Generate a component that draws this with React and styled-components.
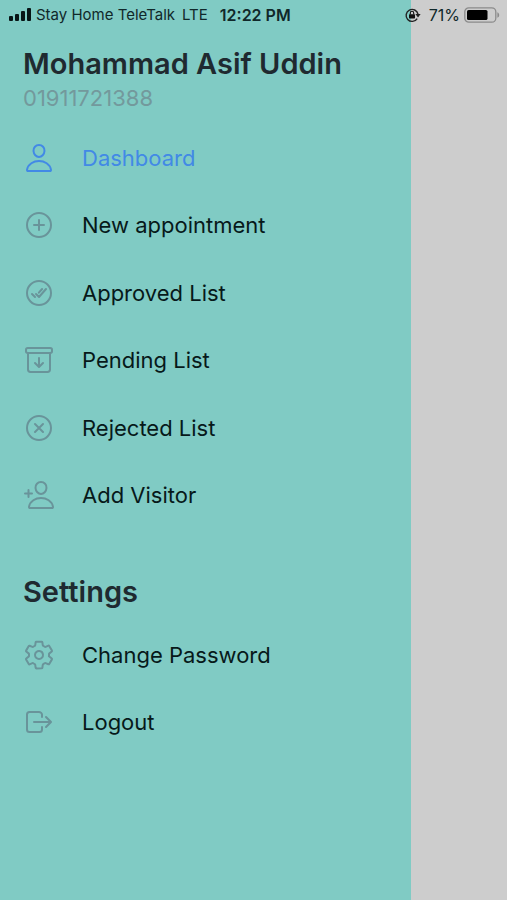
import React from "react";
import styled, { createGlobalStyle } from "styled-components";
import {
  IoPersonOutline,
  IoAddCircleOutline,
  IoCheckmarkDoneCircleOutline,
  IoArchiveOutline,
  IoCloseCircleOutline,
  IoPersonAddOutline,
  IoSettingsOutline,
  IoLogOutOutline,
} from "react-icons/io5";

const GlobalStyle = createGlobalStyle`
  * { box-sizing: border-box; }
  body {
    margin: 0;
    background: #cdcdcd;
    font-family: Inter, "Liberation Sans", sans-serif;
  }
`;

const Screen = styled.div`
  display: grid;
  grid-template-columns: 81% 1fr;
  grid-template-rows: 30px 1fr;
  min-height: 100vh;
`;

const StatusBar = styled.header`
  grid-area: 1 / 1 / 2 / 3;
  z-index: 1;
  display: flex;
  align-items: center;
  padding: 0 7px 0 8px;
  line-height: 20px;
  color: #10282a;
  white-space: nowrap;
`;

const StatusText = styled.span`
  margin-left: ${(p) => p.$gap}px;
  font-size: ${(p) => p.$size}px;
  font-weight: ${(p) => p.$weight || 400};
`;

const StatusRight = styled.div`
  display: flex;
  align-items: center;
  margin-left: auto;
`;

const BatterySvg = styled.svg`
  margin-left: 4px;
`;

const Drawer = styled.aside`
  grid-area: 1 / 1 / 3 / 2;
  padding: 46px 23px 0;
  background: #80cbc4;
`;

const Heading = styled.h1`
  margin: 0;
  font-size: 29px;
  line-height: 36px;
  font-weight: 600;
  color: #1f2a30;
  white-space: nowrap;
`;

const SectionHeading = styled(Heading).attrs({ as: "h2" })`
  margin-top: 45px;
`;

const Phone = styled.p`
  margin: 3px 0 0;
  font-size: 22px;
  line-height: 26px;
  color: #73999c;
`;

const Menu = styled.ul`
  display: grid;
  grid-auto-rows: 1fr;
  min-height: ${(p) => p.$height}px;
  margin: ${(p) => p.$top}px 0 0;
  padding: 0;
  list-style: none;
`;

const MenuLink = styled.a`
  display: flex;
  align-items: center;
  gap: 27px;
  height: 100%;
  font-size: 22px;
  line-height: 28px;
  color: ${(p) => (p.$active ? "#4289e6" : "#07191a")};
  text-decoration: none;

  svg {
    width: 32px;
    height: 32px;
    flex: none;
    color: ${(p) => (p.$active ? "#4289e6" : "#69949a")};
  }
`;

const mainItems = [
  { label: "Dashboard", Icon: IoPersonOutline, active: true },
  { label: "New appointment", Icon: IoAddCircleOutline },
  { label: "Approved List", Icon: IoCheckmarkDoneCircleOutline },
  { label: "Pending List", Icon: IoArchiveOutline },
  { label: "Rejected List", Icon: IoCloseCircleOutline },
  { label: "Add Visitor", Icon: IoPersonAddOutline },
];

const settingsItems = [
  { label: "Change Password", Icon: IoSettingsOutline },
  { label: "Logout", Icon: IoLogOutOutline },
];

function MenuList({ items, height, top }) {
  return (
    <Menu $height={height} $top={top}>
      {items.map(({ label, Icon, active }) => (
        <li key={label}>
          <MenuLink href="#" $active={active} aria-current={active ? "page" : undefined}>
            <Icon aria-hidden="true" />
            {label}
          </MenuLink>
        </li>
      ))}
    </Menu>
  );
}

function SignalIcon() {
  return (
    <svg width="24" height="14" viewBox="0 0 24 14" fill="#071516" aria-hidden="true">
      <rect x="1" y="8" width="4" height="5" rx="1" />
      <rect x="7" y="6" width="4" height="7" rx="1" />
      <rect x="13" y="3" width="4" height="10" rx="1" />
      <rect x="19" y="0" width="4" height="13" rx="1" />
    </svg>
  );
}

function RotationLockIcon() {
  return (
    <svg width="17" height="16" viewBox="0 0 17 16" fill="none" aria-hidden="true">
      <path d="M13.2 11.6A6 6 0 1 1 14 7.2" stroke="#222" strokeWidth="1.4" />
      <path d="M11.4 7h5.2L14 10.4z" fill="#222" />
      <rect x="5" y="7.2" width="6" height="4.2" rx="0.6" fill="#111" />
      <path d="M6.3 7.4V6a1.7 1.7 0 0 1 3.4 0v1.4" stroke="#111" strokeWidth="1.1" />
    </svg>
  );
}

function BatteryIcon() {
  return (
    <BatterySvg width="36" height="16" viewBox="0 0 36 16" aria-hidden="true">
      <rect x="0.8" y="0.8" width="31" height="14.4" rx="4" fill="none" stroke="#8b8b8b" strokeWidth="1.3" />
      <rect x="3" y="3" width="20.5" height="10" rx="1.6" fill="#000" />
      <path d="M33.4 5.2c2.4 1 2.4 4.6 0 5.6z" fill="#8b8b8b" />
    </BatterySvg>
  );
}

export default function App() {
  return (
    <>
      <GlobalStyle />
      <Screen>
        <StatusBar>
          <SignalIcon />
          <StatusText $gap={4} $size={15}>Stay Home TeleTalk</StatusText>
          <StatusText $gap={7} $size={15}>LTE</StatusText>
          <StatusText $gap={12} $size={16} $weight={600}>12:22 PM</StatusText>
          <StatusRight>
            <RotationLockIcon />
            <StatusText $gap={8} $size={16}>71%</StatusText>
            <BatteryIcon />
          </StatusRight>
        </StatusBar>
        <Drawer>
          <Heading>Mohammad Asif Uddin</Heading>
          <Phone>01911721388</Phone>
          <nav aria-label="Main">
            <MenuList items={mainItems} height={405} top={13} />
          </nav>
          <SectionHeading>Settings</SectionHeading>
          <nav aria-label="Settings">
            <MenuList items={settingsItems} height={135} top={11} />
          </nav>
        </Drawer>
      </Screen>
    </>
  );
}
